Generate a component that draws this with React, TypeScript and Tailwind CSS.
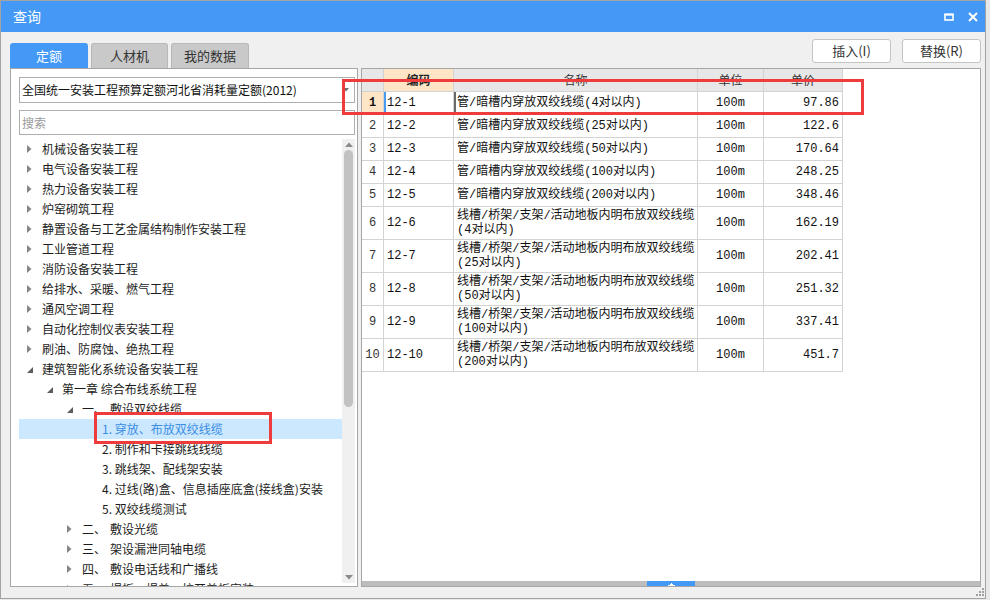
const UI = "font-['Noto_Sans_CJK_SC',sans-serif]";
const MONO = "font-['Liberation_Mono','Noto_Sans_CJK_SC',monospace]";

type TreeNode = {
  lv: number;
  text: string;
  num?: string;
  arrow?: 'open' | 'closed';
  sel?: boolean;
};

const tree: TreeNode[] = [
  { lv: 0, text: '机械设备安装工程', arrow: 'closed' },
  { lv: 0, text: '电气设备安装工程', arrow: 'closed' },
  { lv: 0, text: '热力设备安装工程', arrow: 'closed' },
  { lv: 0, text: '炉窑砌筑工程', arrow: 'closed' },
  { lv: 0, text: '静置设备与工艺金属结构制作安装工程', arrow: 'closed' },
  { lv: 0, text: '工业管道工程', arrow: 'closed' },
  { lv: 0, text: '消防设备安装工程', arrow: 'closed' },
  { lv: 0, text: '给排水、采暖、燃气工程', arrow: 'closed' },
  { lv: 0, text: '通风空调工程', arrow: 'closed' },
  { lv: 0, text: '自动化控制仪表安装工程', arrow: 'closed' },
  { lv: 0, text: '刷油、防腐蚀、绝热工程', arrow: 'closed' },
  { lv: 0, text: '建筑智能化系统设备安装工程', arrow: 'open' },
  { lv: 1, text: '第一章 综合布线系统工程', arrow: 'open' },
  { lv: 2, num: '一、', text: '敷设双绞线缆', arrow: 'open' },
  { lv: 3, text: '1. 穿放、布放双绞线缆', sel: true },
  { lv: 3, text: '2. 制作和卡接跳线线缆' },
  { lv: 3, text: '3. 跳线架、配线架安装' },
  { lv: 3, text: '4. 过线(路)盒、信息插座底盒(接线盒)安装' },
  { lv: 3, text: '5. 双绞线缆测试' },
  { lv: 2, num: '二、', text: '敷设光缆', arrow: 'closed' },
  { lv: 2, num: '三、', text: '架设漏泄同轴电缆', arrow: 'closed' },
  { lv: 2, num: '四、', text: '敷设电话线和广播线', arrow: 'closed' },
  { lv: 2, num: '五、', text: '揭板、揭盖、拉开盖板安装', arrow: 'closed' },
];

const indent = ['pl-[8px]', 'pl-[28px]', 'pl-[48px]', 'pl-[68px]'];

type Row = { no: number; code: string; name: string; name2?: string; price: string };

const rows: Row[] = [
  { no: 1, code: '12-1', name: '管/暗槽内穿放双绞线缆(4对以内)', price: '97.86' },
  { no: 2, code: '12-2', name: '管/暗槽内穿放双绞线缆(25对以内)', price: '122.6' },
  { no: 3, code: '12-3', name: '管/暗槽内穿放双绞线缆(50对以内)', price: '170.64' },
  { no: 4, code: '12-4', name: '管/暗槽内穿放双绞线缆(100对以内)', price: '248.25' },
  { no: 5, code: '12-5', name: '管/暗槽内穿放双绞线缆(200对以内)', price: '348.46' },
  { no: 6, code: '12-6', name: '线槽/桥架/支架/活动地板内明布放双绞线缆', name2: '(4对以内)', price: '162.19' },
  { no: 7, code: '12-7', name: '线槽/桥架/支架/活动地板内明布放双绞线缆', name2: '(25对以内)', price: '202.41' },
  { no: 8, code: '12-8', name: '线槽/桥架/支架/活动地板内明布放双绞线缆', name2: '(50对以内)', price: '251.32' },
  { no: 9, code: '12-9', name: '线槽/桥架/支架/活动地板内明布放双绞线缆', name2: '(100对以内)', price: '337.41' },
  { no: 10, code: '12-10', name: '线槽/桥架/支架/活动地板内明布放双绞线缆', name2: '(200对以内)', price: '451.7' },
];

function Arrow({ kind }: { kind?: 'open' | 'closed' }) {
  if (!kind) return <span className="w-[15px] shrink-0" />;
  return (
    <span className="w-[15px] shrink-0 flex items-center">
      {kind === 'closed' ? (
        <svg width="5" height="8" viewBox="0 0 5 8">
          <path d="M0 0L4.5 4L0 8Z" fill="#858585" />
        </svg>
      ) : (
        <svg width="6" height="6" viewBox="0 0 6 6" className="mt-[2px]">
          <path d="M6 0L6 6L0 6Z" fill="#5c5c5c" />
        </svg>
      )}
    </span>
  );
}

function TitleBar() {
  return (
    <div className={`h-[31px] bg-[#4499f6] flex items-center justify-between pl-[12px] pr-[7px] text-white ${UI}`}>
      <span className="text-[14px]">查询</span>
      <div className="flex items-center gap-[14px]">
        <svg width="10" height="8" viewBox="0 0 10 8">
          <rect x="1" y="1.5" width="8" height="5.5" fill="none" stroke="#fff" strokeWidth="1.6" />
          <rect x="0.5" y="0.5" width="9" height="2" fill="#fff" />
        </svg>
        <svg width="10" height="10" viewBox="0 0 10 10">
          <path d="M1 1L9 9M9 1L1 9" stroke="#fff" strokeWidth="2" />
        </svg>
      </div>
    </div>
  );
}

function Tabs() {
  return (
    <div className={`h-[29px] flex items-end gap-[2px] text-[13px] ${UI}`}>
      <div className="w-[78px] h-[25px] rounded-t-[3px] bg-[#4499f6] text-white flex items-center justify-center">定额</div>
      <div className="w-[77px] h-[25px] rounded-t-[3px] bg-[#c9c9c9] border border-b-0 border-[#b8b8b8] text-[#333] flex items-center justify-center ml-[1px]">人材机</div>
      <div className="w-[78px] h-[25px] rounded-t-[3px] bg-[#c9c9c9] border border-b-0 border-[#b8b8b8] text-[#333] flex items-center justify-center ml-[1px]">我的数据</div>
    </div>
  );
}

function TreePanel() {
  return (
    <div className={`h-[519px] bg-white border border-[#a6a6a6] pl-[8px] pr-[2px] pt-[8px] flex flex-col ${UI}`}>
      <div className="h-[26px] border border-[#adadad] flex items-center justify-between pl-[2px] pr-[5px] text-[12px] text-[#111]">
        <span>全国统一安装工程预算定额河北省消耗量定额(2012)</span>
        <svg width="6" height="4" viewBox="0 0 6 4">
          <path d="M0 0H6L3 3.5Z" fill="#707070" />
        </svg>
      </div>
      <div className="mt-[7px] h-[25px] border border-[#adadad] flex items-center pl-[2px] text-[12px] text-[#9a9a9a]">搜索</div>
      <div className="mt-[4px] h-[447px] flex">
        <div className="flex-1 overflow-hidden">
          {tree.map((n, i) => (
            <div
              key={i}
              className={`h-[20px] flex items-center whitespace-nowrap text-[12px] ${indent[n.lv]} ${n.sel ? 'bg-[#cce8ff] text-[#3b8de3]' : 'text-[#1c1c1c]'}`}
            >
              <Arrow kind={n.arrow} />
              {n.num ? (
                <>
                  <span>{n.num}</span>
                  <span className="ml-[4px]">{n.text}</span>
                </>
              ) : (
                <span>{n.text}</span>
              )}
            </div>
          ))}
        </div>
        <div className="w-[13px] h-[444px] bg-[#f0f0f0] flex flex-col items-center">
          <svg width="8" height="5" viewBox="0 0 8 5" className="mt-[3px]">
            <path d="M0 5L4 0.5L8 5Z" fill="#8a8a8a" />
          </svg>
          <div className="mt-[3px] w-[9px] h-[257px] rounded-full bg-[#c2c2c2]" />
          <div className="flex-1" />
          <svg width="8" height="5" viewBox="0 0 8 5" className="mb-[3px]">
            <path d="M0 0L4 4.5L8 0Z" fill="#8a8a8a" />
          </svg>
        </div>
      </div>
    </div>
  );
}

const cell = 'border-r border-b border-[#d3d3d3]';

function Table() {
  return (
    <div className={`grid grid-cols-[22px_70px_244px_66px_79px] w-[481px] text-[12px] text-[#111] ${MONO}`}>
      <div className={`${cell} h-[23px] bg-[#e7e7e7] border-[#c9c9c9]`} />
      <div className={`${cell} bg-[#fde5c6] border-[#c9c9c9] flex items-center justify-center font-bold text-[#222] ${UI}`}>编码</div>
      <div className={`${cell} bg-[#e7e7e7] border-[#c9c9c9] flex items-center justify-center text-[#333] ${UI}`}>名称</div>
      <div className={`${cell} bg-[#e7e7e7] border-[#c9c9c9] flex items-center justify-center text-[#333] ${UI}`}>单位</div>
      <div className={`${cell} bg-[#e7e7e7] border-[#c9c9c9] flex items-center justify-center text-[#333] ${UI}`}>单价</div>
      {rows.map((r) => {
        const h = r.name2 ? 'h-[33px]' : 'h-[23px]';
        const first = r.no === 1;
        return (
          <div key={r.no} className="contents">
            <div className={`${cell} ${h} flex items-center justify-center ${first ? 'bg-[#fde5c6] font-bold' : 'text-[#333]'}`}>{r.no}</div>
            <div className={`${cell} flex items-center pl-[3px] ${first ? 'shadow-[inset_2px_0_0_#4a9af0]' : ''}`}>{r.code}</div>
            {r.name2 ? (
              <div className={`${cell} pl-[3px] pt-[2px] leading-[14px] whitespace-nowrap flex flex-col`}>
                <span>{r.name}</span>
                <span>{r.name2}</span>
              </div>
            ) : (
              <div className={`${cell} flex items-center pl-[3px] whitespace-nowrap ${first ? 'shadow-[inset_2px_0_0_#6a6a6a]' : ''}`}>{r.name}</div>
            )}
            <div className={`${cell} flex items-center justify-center`}>100m</div>
            <div className={`${cell} flex items-center justify-end pr-[3px]`}>{r.price}</div>
          </div>
        );
      })}
    </div>
  );
}

function ResultPanel() {
  return (
    <div className="h-[519px] bg-white border border-[#a6a6a6] flex flex-col">
      <div className="flex-1">
        <Table />
      </div>
      <div className="h-[5px] bg-[#bdbdbd] flex justify-center">
        <div className="w-[48px] h-[5px] bg-[#4499f6] flex items-end justify-center">
          <svg width="7" height="4" viewBox="0 0 7 4">
            <path d="M0 4H7V3H5V2H4V1H3V2H2V3H0Z" fill="#fff" />
          </svg>
        </div>
      </div>
    </div>
  );
}

export default function App() {
  return (
    <div className="relative w-[990px] h-[600px] bg-[#e8e8e8] overflow-hidden">
      <div className="w-[986px] h-[599px] border border-[#a3a3a3] flex flex-col bg-[#f0f0f0]">
        <TitleBar />
        <div className="flex-1 flex gap-[3px] pl-[9px] pr-[4px] pt-[7px]">
          <div className="w-[348px] flex flex-col">
            <Tabs />
            <TreePanel />
          </div>
          <div className="w-[620px] flex flex-col">
            <div className={`h-[29px] flex justify-end gap-[11px] text-[13px] text-[#333] ${UI}`}>
              <button className="w-[79px] h-[24px] bg-white border border-[#c4c4c4] rounded-[3px]">插入(I)</button>
              <button className="w-[79px] h-[24px] bg-white border border-[#c4c4c4] rounded-[3px]">替换(R)</button>
            </div>
            <ResultPanel />
          </div>
        </div>
      </div>

      {/* resize grip */}
      <svg width="9" height="9" viewBox="0 0 9 9" className="absolute left-[976px] top-[588px]">
        <rect x="6" y="0" width="2" height="2" fill="#a0a0a0" />
        <rect x="3" y="3" width="2" height="2" fill="#a0a0a0" />
        <rect x="6" y="3" width="2" height="2" fill="#a0a0a0" />
        <rect x="0" y="6" width="2" height="2" fill="#a0a0a0" />
        <rect x="3" y="6" width="2" height="2" fill="#a0a0a0" />
        <rect x="6" y="6" width="2" height="2" fill="#a0a0a0" />
      </svg>

      {/* red annotation boxes */}
      <div className="absolute left-[342px] top-[79px] w-[522px] h-[36px] border-[3px] border-[#ee3b3b]" />
      <div className="absolute left-[94px] top-[412px] w-[178px] h-[32px] border-[3px] border-[#ee3b3b]" />
    </div>
  );
}
